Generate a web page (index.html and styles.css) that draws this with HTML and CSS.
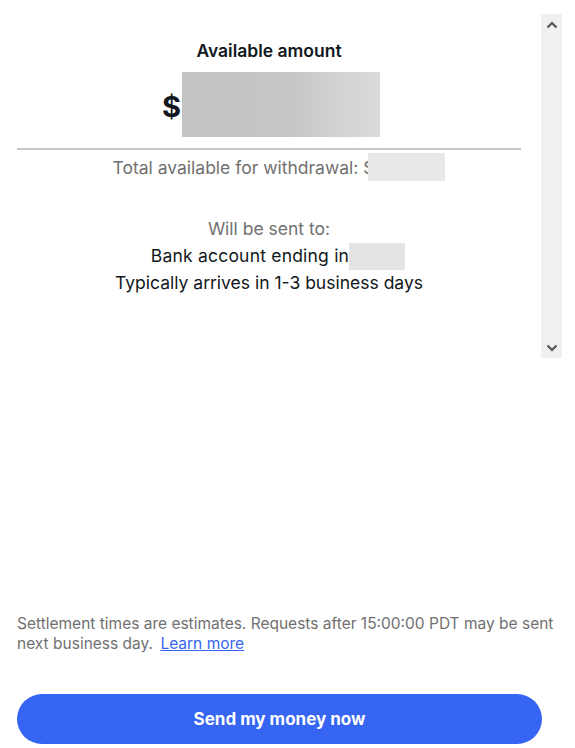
FILE: index.html
```html
<!DOCTYPE html>
<html>
<head>
<meta charset="utf-8">
<link rel="stylesheet" href="styles.css">
</head>
<body>
<div class="page">
  <div class="scroll-area">
    <div class="content">
      <div class="title">Available amount</div>
      <div class="amount-row">
        <span class="dollar">$</span>
        <span class="mask mask-amount"></span>
      </div>
      <div class="divider"></div>
      <div class="total-row">
        <span class="muted">Total available for withdrawal: $</span><span class="mask mask-total"></span>
      </div>
      <div class="sent">
        <div class="muted">Will be sent to:</div>
        <div class="bank-row"><span class="bank-text">Bank account ending in</span><span class="mask mask-bank"></span></div>
        <div>Typically arrives in 1-3 business days</div>
      </div>
    </div>
    <div class="scrollbar">
      <svg class="arrow" width="12" height="8" viewBox="0 0 12 8"><path d="M1.5 6.5 L6 2 L10.5 6.5" fill="none" stroke="#555" stroke-width="2.2"/></svg>
      <svg class="arrow" width="12" height="8" viewBox="0 0 12 8"><path d="M1.5 1.5 L6 6 L10.5 1.5" fill="none" stroke="#555" stroke-width="2.2"/></svg>
    </div>
  </div>
  <div class="footer">
    <p class="note">Settlement times are estimates. Requests after 15:00:00 PDT may be sent next business day. <a href="#" class="link">Learn more</a></p>
    <button class="send-btn">Send my money now</button>
  </div>
</div>
</body>
</html>
```

FILE: styles.css
```css
* { box-sizing: border-box; }
html, body { margin: 0; padding: 0; background: #fff; }
body { font-family: Inter, "Noto Sans", sans-serif; color: #111820; }
.page {
  width: 575px;
  height: 748px;
  padding: 14px 13px 4px 17px;
  display: flex;
  flex-direction: column;
}
.scroll-area {
  display: flex;
  gap: 20px;
  height: 344px;
}
.content {
  width: 504px;
  padding-top: 27px;
  display: flex;
  flex-direction: column;
  align-items: center;
}
.title {
  font-size: 17.5px;
  font-weight: 600;
  line-height: 20px;
}
.amount-row {
  margin-top: 11px;
  display: flex;
  align-items: center;
  height: 65px;
  margin-left: 4px;
}
.dollar {
  font-size: 29px;
  font-weight: 700;
  margin-right: 1px;
  position: relative;
  top: 2px;
}
.mask { display: inline-block; }
.mask-amount {
  width: 198px;
  height: 65px;
  background: linear-gradient(90deg, #c3c3c3 0%, #c6c6c6 55%, #dcdcdc 100%);
}
.divider {
  align-self: stretch;
  height: 2px;
  background: #c8c8c8;
  margin-top: 11px;
}
.total-row {
  margin-top: 3px;
  display: flex;
  align-items: center;
  height: 28px;
  font-size: 17.5px;
  margin-left: 19px;
}
.muted { color: #707070; }
.mask-total {
  width: 77px;
  height: 28px;
  background: #e8e8e8;
  margin-left: -7px;
}
.sent {
  margin-top: 35px;
  font-size: 17.5px;
  line-height: 26px;
  text-align: center;
}
.bank-row {
  display: flex;
  align-items: center;
  justify-content: center;
  height: 28px;
  margin-left: 18px;
}
.bank-text { letter-spacing: 0.2px; }
.mask-bank {
  width: 56px;
  height: 27px;
  background: #e4e4e4;
}
.scrollbar {
  width: 21px;
  background: #f0f0f0;
  display: flex;
  flex-direction: column;
  justify-content: space-between;
  align-items: center;
  padding: 7px 0 6px;
}
.footer {
  margin-top: auto;
  padding-right: 4px;
}
.note {
  margin: 0;
  font-size: 15.5px;
  line-height: 20px;
  color: #707070;
}
.link { color: #3665f3; margin-left: 3px; }
.send-btn {
  margin-top: 40px;
  width: 525px;
  height: 50px;
  border: none;
  border-radius: 25px;
  background: #3665f3;
  color: #fff;
  font-family: inherit;
  font-size: 17px;
  font-weight: 700;
}
```
